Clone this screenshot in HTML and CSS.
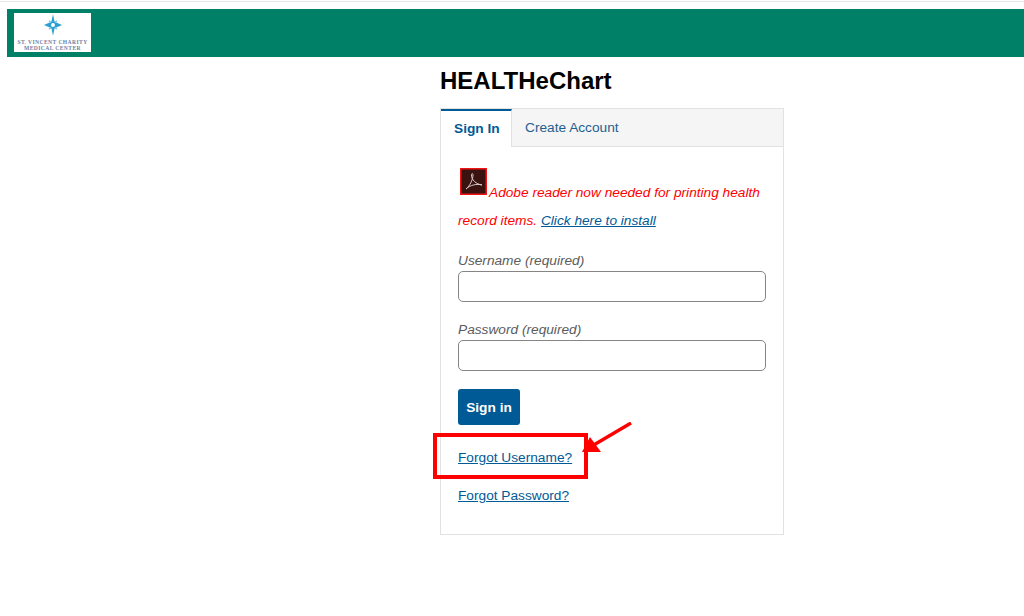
FILE: index.html
```html
<!DOCTYPE html>
<html lang="en">
<head>
<meta charset="utf-8">
<title>HEALTHeChart</title>
<link rel="stylesheet" href="styles.css">
</head>
<body>
<div class="topline"></div>
<header class="band">
  <div class="logo">
    <svg class="star" viewBox="0 0 20 24" width="18" height="22" aria-hidden="true">
      <path d="M10 0 L11.8 8.5 L20 12 L11.8 15.5 L10 24 L8.2 15.5 L0 12 L8.2 8.5 Z" fill="#2b9fd0"/>
      <circle cx="10" cy="12" r="2.2" fill="#fff"/>
      <path d="M5.5 7.5 L8 9 M14.5 7.5 L12 9 M5.5 16.5 L8 15 M14.5 16.5 L12 15" stroke="#7cc6e6" stroke-width="1.6"/>
    </svg>
    <div class="logo-text">ST. VINCENT CHARITY<br>MEDICAL CENTER</div>
  </div>
</header>
<main class="column">
  <h1 class="title">HEALTHeChart</h1>
  <section class="panel">
    <nav class="tabs">
      <a class="tab active">Sign In</a>
      <a class="tab">Create Account</a>
      <span class="tab-fill"></span>
    </nav>
    <div class="body">
      <p class="notice"><svg class="pdf" viewBox="0 0 27 27" width="27" height="27" aria-hidden="true">
          <rect x="0.75" y="0.75" width="25.5" height="25.5" fill="#3a1311" stroke="#f01414" stroke-width="1.5"/>
          <path d="M6 21 C10 18 13 11 13 7 C13 5 11.5 5 11.5 7 C11.5 12 16 16 22 17 C17 15.5 10 17 6 21 Z" fill="none" stroke="#d8cccc" stroke-width="1"/>
        </svg><em>Adobe reader now needed for printing health record items. <a class="link" href="#">Click here to install</a></em></p>
      <label class="label" for="u">Username (required)</label>
      <input class="input" id="u" type="text">
      <label class="label second" for="p">Password (required)</label>
      <input class="input" id="p" type="password">
      <button class="btn" type="button">Sign in</button>
      <p class="forgot first"><a class="link" href="#">Forgot Username?</a></p>
      <p class="forgot"><a class="link" href="#">Forgot Password?</a></p>
    </div>
  </section>
  <div class="callout"></div>
  <svg class="arrow" viewBox="0 0 50 36" width="50" height="36" aria-hidden="true">
    <path d="M49 1 L10 24" stroke="#ff0000" stroke-width="3.4" fill="none"/>
    <path d="M0 30 L8 15 L19 30 Z" fill="#ff0000"/>
  </svg>
</main>
</body>
</html>
```
FILE: styles.css
```css
* { box-sizing: border-box; }
html, body { margin: 0; padding: 0; }
body {
  background: #fff;
  font-family: "Liberation Sans", Arial, sans-serif;
  font-size: 13.7px;
  color: #333;
  height: 616px;
  overflow: hidden;
}
.topline { height: 1px; margin-top: 1px; background: #e6e6e6; }
.band {
  margin: 7px 0 0 7px;
  height: 48px;
  background: #008066;
  padding: 4px 0 0 7px;
}
.logo {
  width: 77px;
  height: 39px;
  background: #fff;
  display: flex;
  flex-direction: column;
  align-items: center;
  padding-top: 1px;
}
.star { display: block; flex: none; }
.logo-text {
  font-family: "Liberation Serif", serif;
  font-size: 5.6px;
  font-weight: 700;
  line-height: 6px;
  letter-spacing: 0.4px;
  color: #6f7fa3;
  text-align: center;
  white-space: nowrap;
  margin-top: 3px;
}
.column {
  position: relative;
  width: 344px;
  margin-left: 440px;
}
.title {
  margin: 0;
  padding-top: 10px;
  height: 51px;
  font-size: 24px;
  line-height: 28px;
  font-weight: 700;
  color: #000;
}
.panel {
  height: 427px;
  border: 1px solid #e2e2e2;
}
.tabs { display: flex; height: 38px; }
.tab {
  display: block;
  padding: 0 13px;
  line-height: 37px;
  white-space: nowrap;
  color: #1f5f8f;
  background: #f5f5f5;
  border-bottom: 1px solid #e2e2e2;
}
.tab.active {
  width: 71px;
  background: #fff;
  color: #005a96;
  font-weight: 700;
  border-top: 2px solid #005a96;
  border-bottom: 0;
  border-right: 1px solid #e2e2e2;
  line-height: 36px;
  height: 38px;
}
.tab-fill { flex: 1; background: #f5f5f5; border-bottom: 1px solid #e2e2e2; }
.body { padding: 0 17px; }
.notice {
  margin: 0;
  padding-top: 21px;
  height: 106px;
  line-height: 28px;
  color: #ff0000;
}
.pdf { vertical-align: 2px; margin: 0 2px 0 2px; }
.link { color: #005a96; text-decoration: underline; }
.label {
  display: block;
  font-style: italic;
  color: #5c5c5c;
  line-height: 16px;
  height: 18px;
}
.label.second { margin-top: 20px; }
.input {
  display: block;
  width: 308px;
  height: 31px;
  border: 1px solid #858585;
  border-radius: 5px;
  background: #fff;
  margin: 0;
  padding: 0 6px;
}
.btn {
  display: block;
  width: 62px;
  height: 36px;
  margin: 18px 0 0;
  border: 0;
  border-radius: 3px;
  background: #005a96;
  color: #fff;
  font: 700 13.7px "Liberation Sans", Arial, sans-serif;
  padding: 0;
}
.forgot { margin: 0; line-height: 16px; height: 38px; }
.forgot.first { margin-top: 25px; }
.callout {
  position: absolute;
  left: -7px;
  top: 376px;
  width: 155px;
  height: 46px;
  border: 4px solid #ff0000;
}
.arrow {
  position: absolute;
  left: 142px;
  top: 365px;
}
```
